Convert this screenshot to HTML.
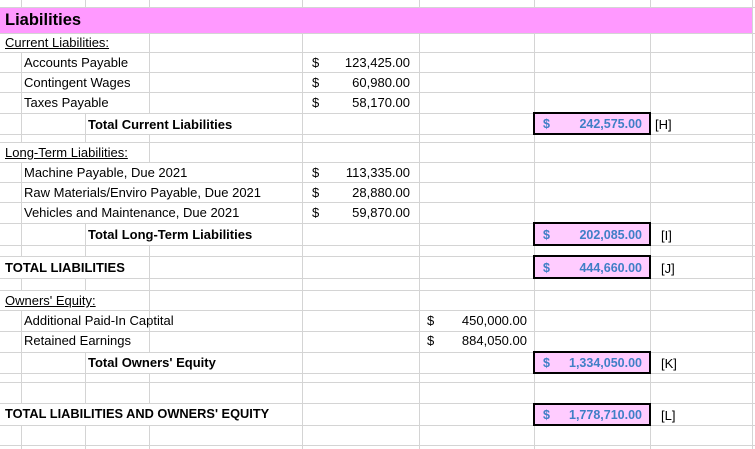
<!DOCTYPE html>
<html><head><meta charset="utf-8"><style>
body{margin:0;width:755px;height:449px;overflow:hidden;background:#fff;position:relative;font-family:"Liberation Sans",Arial,sans-serif;font-size:13px;color:#000}
.v{position:absolute;top:0;height:449px;width:1px;background:#d4d4d4}
.h{position:absolute;left:0;width:755px;height:1px;background:#d4d4d4}
.c{position:absolute;background:#fff;white-space:nowrap;box-sizing:border-box}
.t{position:absolute;white-space:nowrap}
.b{font-weight:bold}
.u{text-decoration:underline}
.box{position:absolute;left:533px;width:118px;background:#ffccff;border:2px solid #000;box-sizing:border-box;color:#3f7fc6;font-weight:bold;font-size:12.5px}
.box span{position:absolute;bottom:2px}
.num{text-align:right}
</style></head><body>
<div class="v" style="left:21px"></div><div class="v" style="left:85px"></div><div class="v" style="left:149px"></div>
<div class="v" style="left:302px"></div><div class="v" style="left:419px"></div><div class="v" style="left:534px"></div>
<div class="v" style="left:650px"></div><div class="v" style="left:752px"></div>
<div class="h" style="top:7px"></div><div class="h" style="top:33px"></div><div class="h" style="top:52px"></div>
<div class="h" style="top:72px"></div><div class="h" style="top:92px"></div><div class="h" style="top:113px"></div>
<div class="h" style="top:134px"></div><div class="h" style="top:142px"></div><div class="h" style="top:162px"></div>
<div class="h" style="top:182px"></div><div class="h" style="top:202px"></div><div class="h" style="top:223px"></div>
<div class="h" style="top:245px"></div><div class="h" style="top:256px"></div><div class="h" style="top:278px"></div>
<div class="h" style="top:290px"></div><div class="h" style="top:310px"></div><div class="h" style="top:331px"></div>
<div class="h" style="top:352px"></div><div class="h" style="top:373px"></div><div class="h" style="top:382px"></div>
<div class="h" style="top:403px"></div><div class="h" style="top:425px"></div><div class="h" style="top:445px"></div>

<div class="c" style="left:0;top:8px;width:752px;height:25px;background:#ff99ff"></div>
<div class="t b" style="left:5px;top:11px;font-size:16.5px">Liabilities</div>

<div class="c" style="left:0;top:34px;width:149px;height:18px"></div>
<div class="t u" style="left:5px;top:35px">Current Liabilities:</div>
<div class="c" style="left:22px;top:53px;width:127px;height:19px"></div>
<div class="t" style="left:24px;top:55px">Accounts Payable</div>
<div class="c" style="left:22px;top:73px;width:127px;height:19px"></div>
<div class="t" style="left:24px;top:75px">Contingent Wages</div>
<div class="c" style="left:22px;top:93px;width:127px;height:20px"></div>
<div class="t" style="left:24px;top:95px">Taxes Payable</div>
<div class="c" style="left:86px;top:114px;width:216px;height:20px"></div>
<div class="t b" style="left:88px;top:117px">Total Current Liabilities</div>

<div class="t" style="left:312px;top:55px">$</div><div class="t num" style="right:345px;top:55px">123,425.00</div>
<div class="t" style="left:312px;top:75px">$</div><div class="t num" style="right:345px;top:75px">60,980.00</div>
<div class="t" style="left:312px;top:95px">$</div><div class="t num" style="right:345px;top:95px">58,170.00</div>
<div class="box" style="top:112px;height:23px"><span style="left:8px">$</span><span style="right:7px">242,575.00</span></div>
<div class="t" style="left:655px;top:117px">[H]</div>

<div class="c" style="left:0;top:143px;width:149px;height:19px"></div>
<div class="t u" style="left:5px;top:145px">Long-Term Liabilities:</div>
<div class="c" style="left:22px;top:163px;width:280px;height:19px"></div>
<div class="t" style="left:24px;top:165px">Machine Payable, Due 2021</div>
<div class="c" style="left:22px;top:183px;width:280px;height:19px"></div>
<div class="t" style="left:24px;top:185px">Raw Materials/Enviro Payable, Due 2021</div>
<div class="c" style="left:22px;top:203px;width:280px;height:20px"></div>
<div class="t" style="left:24px;top:205px">Vehicles and Maintenance, Due 2021</div>
<div class="c" style="left:86px;top:224px;width:216px;height:21px"></div>
<div class="t b" style="left:88px;top:227px">Total Long-Term Liabilities</div>
<div class="t" style="left:312px;top:165px">$</div><div class="t num" style="right:345px;top:165px">113,335.00</div>
<div class="t" style="left:312px;top:185px">$</div><div class="t num" style="right:345px;top:185px">28,880.00</div>
<div class="t" style="left:312px;top:205px">$</div><div class="t num" style="right:345px;top:205px">59,870.00</div>
<div class="box" style="top:222px;height:24px"><span style="left:8px">$</span><span style="right:7px">202,085.00</span></div>
<div class="t" style="left:661px;top:228px">[I]</div>

<div class="c" style="left:0;top:257px;width:149px;height:21px"></div>
<div class="t b" style="left:5px;top:260px">TOTAL LIABILITIES</div>
<div class="box" style="top:255px;height:24px"><span style="left:8px">$</span><span style="right:7px">444,660.00</span></div>
<div class="t" style="left:661px;top:261px">[J]</div>

<div class="c" style="left:0;top:291px;width:149px;height:19px"></div>
<div class="t u" style="left:5px;top:293px">Owners' Equity:</div>
<div class="c" style="left:22px;top:311px;width:127px;height:20px"></div>
<div class="t" style="left:24px;top:313px">Additional Paid-In Captital</div>
<div class="c" style="left:22px;top:332px;width:127px;height:20px"></div>
<div class="t" style="left:24px;top:333px">Retained Earnings</div>
<div class="c" style="left:86px;top:353px;width:216px;height:20px"></div>
<div class="t b" style="left:88px;top:355px">Total Owners' Equity</div>
<div class="t" style="left:427px;top:313px">$</div><div class="t num" style="right:228px;top:313px">450,000.00</div>
<div class="t" style="left:427px;top:333px">$</div><div class="t num" style="right:228px;top:333px">884,050.00</div>
<div class="box" style="top:351px;height:23px"><span style="left:8px">$</span><span style="right:7px">1,334,050.00</span></div>
<div class="t" style="left:661px;top:356px">[K]</div>

<div class="c" style="left:0;top:404px;width:302px;height:21px"></div>
<div class="t b" style="left:5px;top:406px;font-size:12.8px">TOTAL LIABILITIES AND OWNERS' EQUITY</div>
<div class="box" style="top:403px;height:23px"><span style="left:8px">$</span><span style="right:7px">1,778,710.00</span></div>
<div class="t" style="left:661px;top:408px">[L]</div>
</body></html>
